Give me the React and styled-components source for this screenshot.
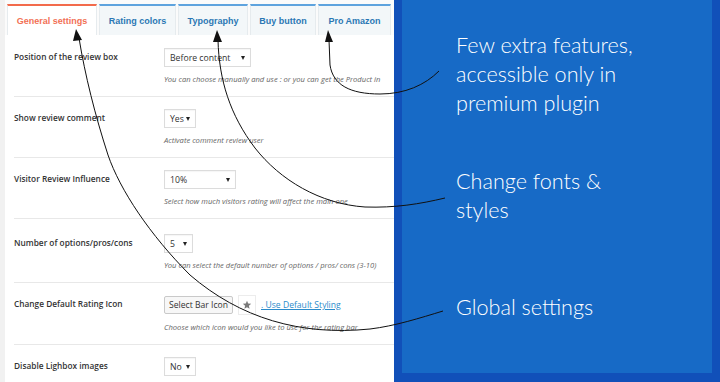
import React from 'react';
import styled, { createGlobalStyle } from 'styled-components';

const GlobalStyle = createGlobalStyle`
  html, body {
    margin: 0;
    padding: 0;
    background: #1150b9;
  }
  * {
    box-sizing: border-box;
  }
`;

const Page = styled.div`
  position: relative;
  display: flex;
  width: 720px;
  height: 382px;
  overflow: hidden;
  font-family: "Open Sans", "Liberation Sans", sans-serif;
`;

const SettingsPanel = styled.div`
  width: 394px;
  flex-shrink: 0;
  background: #fff;
  border-left: 5px solid #f1f1f1;
  display: flex;
  flex-direction: column;
`;

const TabBar = styled.div`
  display: flex;
  gap: 2px;
  padding: 4px 0 0 2px;
  background: #fbfbfb;
`;

const Tab = styled.div`
  width: ${(p) => p.$w}px;
  height: 31px;
  display: flex;
  align-items: center;
  justify-content: center;
  font-family: "Liberation Sans", Arial, sans-serif;
  font-weight: bold;
  font-size: 9px;
  white-space: nowrap;
  color: ${(p) => (p.$active ? '#f27155' : '#2b77b4')};
  background: ${(p) => (p.$active ? '#fff' : '#f3f7f9')};
  border-top: 2px solid ${(p) => (p.$active ? '#f26a4b' : '#5ea3de')};
  border-left: 1px solid #e6ebee;
  border-right: 1px solid #e6ebee;
`;

const Rows = styled.div`
  display: flex;
  flex-direction: column;
  padding-left: 9px;
`;

const Row = styled.div`
  display: grid;
  grid-template-columns: 150px 1fr;
  padding: ${(p) => p.$top || 12}px 0 12px;
  border-bottom: 1px solid #e8e8e8;
  &:last-child {
    border-bottom: none;
  }
`;

const Label = styled.div`
  padding-top: 3px;
  font-size: 8.3px;
  line-height: 12px;
  font-weight: 600;
  color: #333;
  white-space: nowrap;
`;

const Field = styled.div`
  display: flex;
  flex-direction: column;
  gap: 7px;
  min-width: 0;
`;

const Controls = styled.div`
  display: flex;
  align-items: center;
  gap: 5px;
`;

const Select = styled.div`
  width: ${(p) => p.$w}px;
  height: 19px;
  display: flex;
  align-items: center;
  justify-content: space-between;
  padding: 0 5px;
  border: 1px solid #dcdcdc;
  background: #fff;
  box-shadow: inset 0 1px 1px rgba(0, 0, 0, 0.04);
  font-size: 8.7px;
  color: #333;
`;

const Caret = styled.span`
  width: 0;
  height: 0;
  border-left: 2.5px solid transparent;
  border-right: 2.5px solid transparent;
  border-top: 4px solid #222;
`;

const Button = styled.div`
  height: 18px;
  padding: 0 4px;
  display: flex;
  align-items: center;
  border: 1px solid #c9c9c9;
  border-radius: 2px;
  background: #f7f7f7;
  font-size: 8.6px;
  color: #333;
  white-space: nowrap;
`;

const StarBox = styled.div`
  width: 18px;
  height: 20px;
  display: flex;
  align-items: center;
  justify-content: center;
  border: 1px solid #ececec;
  background: #fff;
`;

const Link = styled.a`
  font-size: 8.6px;
  color: #2b8bcb;
  text-decoration: underline;
  white-space: nowrap;
`;

const Hint = styled.div`
  font-size: 7.6px;
  line-height: 10px;
  font-style: italic;
  color: #666;
  white-space: nowrap;
`;

const Frame = styled.div`
  flex: 1;
  background: #1150b9;
  padding: 0 8px 9px 8px;
  display: flex;
`;

const Callouts = styled.div`
  flex: 1;
  background: #176ac6;
  padding-left: 54px;
  display: flex;
  flex-direction: column;
`;

const Callout = styled.div`
  margin-top: ${(p) => p.$top}px;
  font-family: Lato, "Open Sans", sans-serif;
  font-weight: 300;
  font-size: 21.6px;
  line-height: 29px;
  color: #fff;
`;

const Arrows = styled.svg`
  position: absolute;
  left: 0;
  top: 0;
  pointer-events: none;
`;

const tabs = [
  { name: 'General settings', w: 90, active: true },
  { name: 'Rating colors', w: 77 },
  { name: 'Typography', w: 70 },
  { name: 'Buy button', w: 66 },
  { name: 'Pro Amazon', w: 73 },
];

const settings = [
  {
    label: 'Position of the review box',
    value: 'Before content',
    width: 87,
    hint: 'You can choose manually and use : or you can get the Product in',
    top: 13,
  },
  { label: 'Show review comment', value: 'Yes', width: 32, hint: 'Activate comment review user' },
  {
    label: 'Visitor Review Influence',
    value: '10%',
    width: 72,
    hint: 'Select how much visitors rating will affect the main one',
  },
  {
    label: 'Number of options/pros/cons',
    value: '5',
    width: 29,
    hint: 'You can select the default number of options / pros/ cons (3-10)',
    top: 15,
  },
  { label: 'Change Default Rating Icon', icon: true, hint: 'Choose which icon would you like to use for the rating bar' },
  { label: 'Disable Lighbox images', value: 'No', width: 32 },
];

const Star = () => (
  <svg width="10" height="10" viewBox="0 0 24 24">
    <path
      d="M12 2l2.9 6.6 7.1.6-5.4 4.7 1.6 7-6.2-3.7-6.2 3.7 1.6-7L2 9.2l7.1-.6z"
      fill="#7a7a7a"
    />
  </svg>
);

const Pointer = ({ d, head }) => (
  <g>
    <path d={d} fill="none" stroke="#111" strokeWidth="1" />
    <polygon points={head} fill="#111" />
  </g>
);

const App = () => {
  return (
    <Page>
      <GlobalStyle />
      <SettingsPanel>
        <TabBar>
          {tabs.map((t) => (
            <Tab key={t.name} $w={t.w} $active={t.active}>
              {t.name}
            </Tab>
          ))}
        </TabBar>
        <Rows>
          {settings.map((s) => (
            <Row key={s.label} $top={s.top}>
              <Label>{s.label}</Label>
              <Field>
                {s.icon ? (
                  <Controls>
                    <Button>Select Bar Icon</Button>
                    <StarBox>
                      <Star />
                    </StarBox>
                    <Link>. Use Default Styling</Link>
                  </Controls>
                ) : (
                  <Controls>
                    <Select $w={s.width}>
                      {s.value}
                      <Caret />
                    </Select>
                  </Controls>
                )}
                {s.hint && <Hint>{s.hint}</Hint>}
              </Field>
            </Row>
          ))}
        </Rows>
      </SettingsPanel>
      <Frame>
        <Callouts>
          <Callout $top={31}>
            Few extra features,
            <br />
            accessible only in
            <br />
            premium plugin
          </Callout>
          <Callout $top={49}>
            Change fonts &amp;
            <br />
            styles
          </Callout>
          <Callout $top={68}>Global settings</Callout>
        </Callouts>
      </Frame>
      <Arrows width="720" height="382" viewBox="0 0 720 382">
        <Pointer
          d="M443,311 C420,318 395,326 370,329 C300,336 240,318 190,275 C150,235 120,190 108,155 C95,115 85,75 79,38"
          head="76,29 73,41 82,40"
        />
        <Pointer
          d="M445,198 C420,204 395,208 365,207 C320,204 280,180 255,148 C230,115 219,80 218,40"
          head="217,30 213,42 222,42"
        />
        <Pointer
          d="M439,71 C425,85 405,94 380,94 C350,94 333,85 330,65 L329,40"
          head="328,30 325,42 333,42"
        />
      </Arrows>
    </Page>
  );
};

export default App;
